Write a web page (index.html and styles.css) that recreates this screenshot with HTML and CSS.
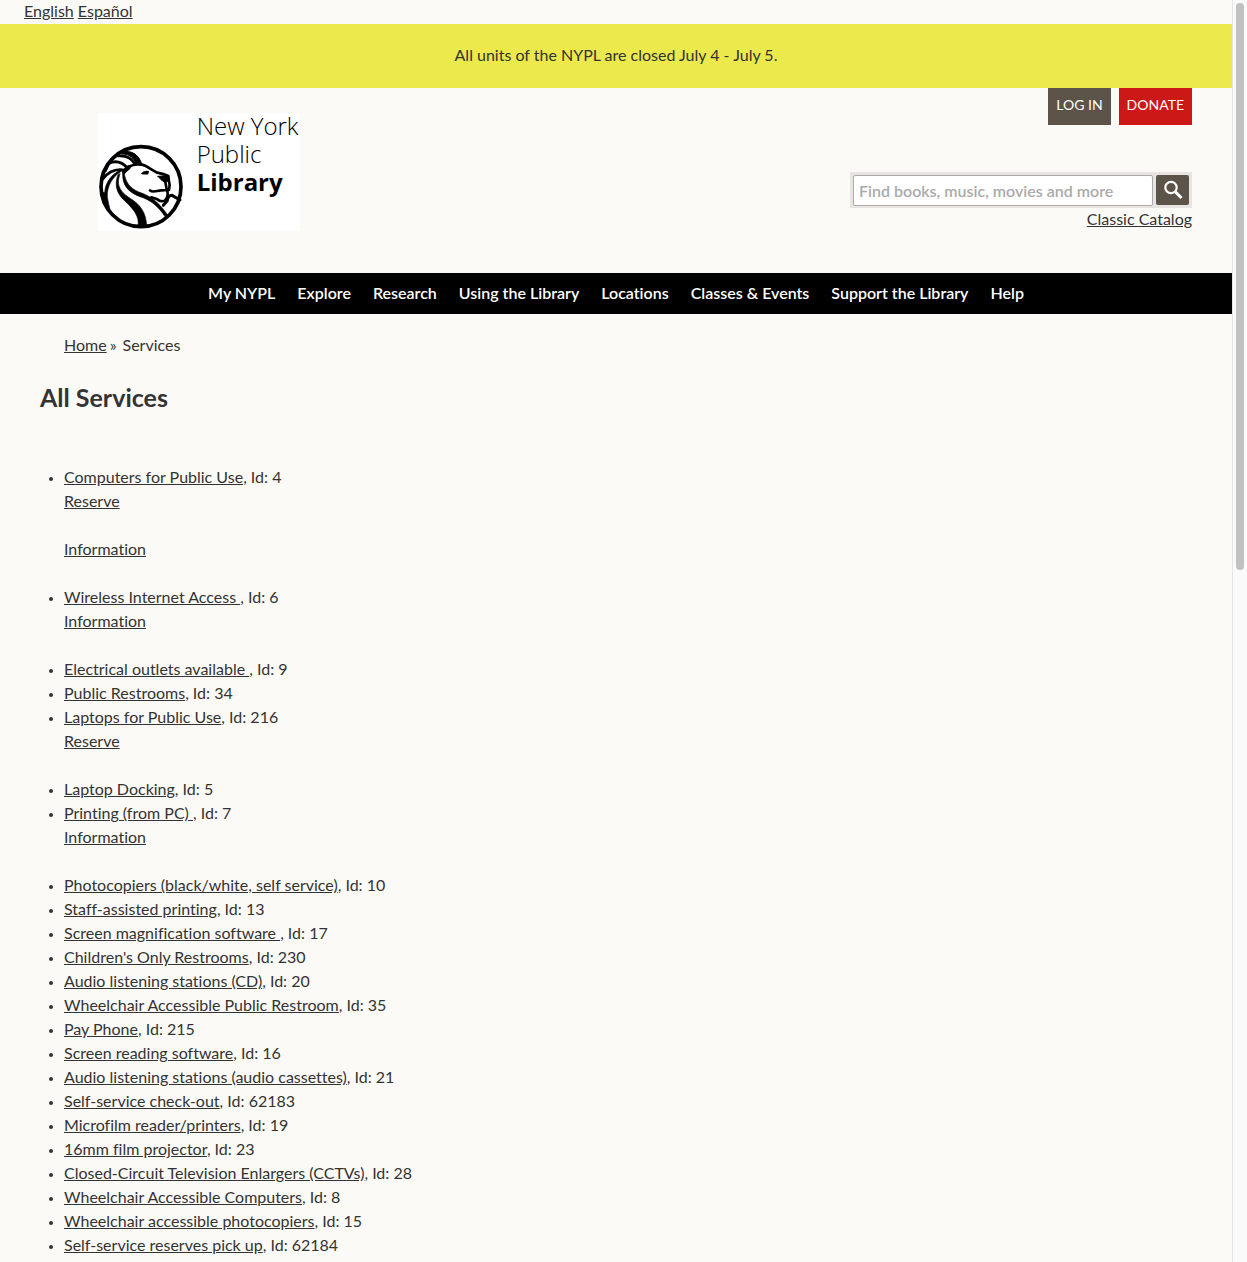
FILE: index.html
```html
<!DOCTYPE html>
<html lang="en">
<head>
<meta charset="utf-8">
<title>All Services | The New York Public Library</title>
<link rel="stylesheet" href="styles.css">
</head>
<body>
<div class="page">
  <div class="languages"><a href="#">English</a> <a href="#">Español</a></div>
  <p class="alert">All units of the NYPL are closed July 4 - July 5.</p>

  <header class="header">
    <a class="logo" href="#" aria-label="New York Public Library">
      <svg viewBox="0 0 606 354" width="202" height="118">
        <g transform="translate(-6 87)" fill="none" stroke="#000" stroke-width="8" stroke-linecap="round" stroke-linejoin="round">
          <circle cx="135" cy="134" r="120" stroke-width="11"/>
          <path d="M84 92C92 74 112 64 138 68C154 72 166 84 184 92C198 95 208 98 217 102"/>
          <path d="M186 103L217 101Q223 106 220 113L215 118L206 121Q194 114 186 103Z" fill="#000" stroke-width="3"/>
          <path d="M218 112Q223 128 219 144L196 145C182 146 170 153 162 145M208 120L212 142" stroke-width="8"/>
          <path d="M214 146Q218 166 206 176Q196 181 184 172L166 166" stroke-width="8"/>
          <path d="M134 95Q144 83 159 87L157 97Q145 99 134 95Z" fill="#000" stroke="none"/>
          <path d="M84 90C88 122 102 138 128 150C158 160 184 174 214 218L206 222C184 190 164 174 132 164C96 150 78 130 80 92Z" fill="#000" stroke-width="2"/>
          <path d="M72 96C58 132 76 152 104 170C132 188 150 210 152 252L126 254C132 222 110 200 90 180C62 156 54 130 66 98Z" fill="#000" stroke-width="2"/>
          <path d="M82 84C56 98 38 122 34 152C32 170 40 188 44 214L24 186L17 150L26 152C28 122 46 94 80 82Z" fill="#000" stroke-width="2"/>
          <path d="M84 84C58 80 36 90 20 112"/>
          <path d="M92 76C76 58 56 56 38 64M38 64L28 86" stroke-width="9"/>
          <path d="M116 65C106 48 88 40 66 42"/>
          <path d="M88 28C116 28 130 44 138 68L120 66C114 48 102 36 78 36Z" fill="#000" stroke-width="3"/>
          <path d="M84 88L98 76" stroke-width="13"/>
          <path d="M214 176Q216 160 228 160L252 174M214 176L202 190" stroke-width="9"/>
        </g>
        <g font-family="Open Sans, sans-serif" font-size="72">
          <text x="296" y="67" font-weight="300">New York</text>
          <text x="296" y="151" font-weight="300">Public</text>
          <text x="296" y="234" font-weight="700">Library</text>
        </g>
      </svg>
    </a>
    <div class="tools">
      <div class="actions">
        <a class="action" href="#">LOG IN</a>
        <a class="action donate" href="#">DONATE</a>
      </div>
      <form class="search">
        <input class="query" type="text" aria-label="Search the catalog" placeholder="Find books, music, movies and more">
        <button class="submit" type="button" aria-label="Search">
          <svg viewBox="0 0 20 20" width="20" height="20" aria-hidden="true"><circle cx="8" cy="7.5" r="5.7" fill="none" stroke="#fff" stroke-width="2.2"/><path d="M12 11.5L18.5 18" stroke="#fff" stroke-width="3"/></svg>
        </button>
      </form>
      <a class="classic" href="#">Classic Catalog</a>
    </div>
  </header>

  <nav class="nav">
    <a href="#">My NYPL</a>
    <a href="#">Explore</a>
    <a href="#">Research</a>
    <a href="#">Using the Library</a>
    <a href="#">Locations</a>
    <a href="#">Classes &amp; Events</a>
    <a href="#">Support the Library</a>
    <a href="#">Help</a>
  </nav>

  <main class="main">
    <div class="crumbs"><a href="#">Home</a><span class="divider">»</span><span>Services</span></div>
    <h1 class="title">All Services</h1>
    <ul class="services">
      <li><a href="#">Computers for Public Use</a>, Id: 4
        <p class="link"><a href="#">Reserve</a></p>
        <p class="link"><a href="#">Information</a></p></li>
      <li><a href="#">Wireless Internet Access </a>, Id: 6
        <p class="link"><a href="#">Information</a></p></li>
      <li><a href="#">Electrical outlets available </a>, Id: 9</li>
      <li><a href="#">Public Restrooms</a>, Id: 34</li>
      <li><a href="#">Laptops for Public Use</a>, Id: 216
        <p class="link"><a href="#">Reserve</a></p></li>
      <li><a href="#">Laptop Docking</a>, Id: 5</li>
      <li><a href="#">Printing (from PC) </a>, Id: 7
        <p class="link"><a href="#">Information</a></p></li>
      <li><a href="#">Photocopiers (black/white, self service)</a>, Id: 10</li>
      <li><a href="#">Staff-assisted printing</a>, Id: 13</li>
      <li><a href="#">Screen magnification software </a>, Id: 17</li>
      <li><a href="#">Children's Only Restrooms</a>, Id: 230</li>
      <li><a href="#">Audio listening stations (CD)</a>, Id: 20</li>
      <li><a href="#">Wheelchair Accessible Public Restroom</a>, Id: 35</li>
      <li><a href="#">Pay Phone</a>, Id: 215</li>
      <li><a href="#">Screen reading software</a>, Id: 16</li>
      <li><a href="#">Audio listening stations (audio cassettes)</a>, Id: 21</li>
      <li><a href="#">Self-service check-out</a>, Id: 62183</li>
      <li><a href="#">Microfilm reader/printers</a>, Id: 19</li>
      <li><a href="#">16mm film projector</a>, Id: 23</li>
      <li><a href="#">Closed-Circuit Television Enlargers (CCTVs)</a>, Id: 28</li>
      <li><a href="#">Wheelchair Accessible Computers</a>, Id: 8</li>
      <li><a href="#">Wheelchair accessible photocopiers</a>, Id: 15</li>
      <li><a href="#">Self-service reserves pick up</a>, Id: 62184</li>
    </ul>
  </main>
</div>
<div class="scrollbar" aria-hidden="true"><div class="thumb"></div></div>
</body>
</html>
```
FILE: styles.css
```css
* { box-sizing: border-box; }
body {
  margin: 0;
  padding-right: 15px;
  background: #fcfaf6;
  color: #333;
  font: 16px/24px Lato, "Liberation Sans", sans-serif;
  font-variant-ligatures: none;
}
a { color: inherit; text-decoration: underline; }
p { margin: 0; }

.languages { padding: 0 24px 2px; line-height: 22px; }
.alert {
  padding: 19px 24px 21px;
  background: #ece94c;
  text-align: center;
}

.header {
  display: flex;
  justify-content: space-between;
  align-items: flex-start;
  padding: 0 40px 42px 98px;
}
.logo {
  display: flex;
  margin-top: 25px;
  background: #fff;
  color: #000;
}
.logo svg { overflow: visible; }
.logo text { fill: #000; }

.tools {
  display: flex;
  flex-direction: column;
  align-items: flex-end;
}
.actions { display: flex; gap: 8px; margin-bottom: 47px; }
.action {
  height: 37px;
  padding: 5px 8px;
  background: #5d5449;
  color: #fff;
  font-size: 14px;
  text-decoration: none;
}
.donate { background: #cc1917; }
.search {
  display: flex;
  gap: 3px;
  padding: 3px 3px 2px;
  background: #e8e4e1;
}
.query {
  width: 300px;
  height: 31px;
  padding: 1px 5px;
  border: 1px solid #aaa;
  border-radius: 2px;
  background: #fff;
  font: 600 16px/24px Lato, sans-serif;
}
.query::placeholder { color: #aaa; opacity: 1; }
.submit {
  display: flex;
  align-items: center;
  justify-content: center;
  width: 33px;
  height: 30px;
  padding: 0;
  border: 0;
  border-radius: 2px;
  background: #5d5449;
}
.classic { line-height: 22px; }

.nav {
  display: flex;
  justify-content: center;
  gap: 22px;
  padding: 8px 0 9px;
  background: #000;
  color: #fff;
  font-weight: 600;
}
.nav a { text-decoration: none; }

.main { padding: 19px 40px 4px; }
.crumbs { padding-left: 24px; }
.divider { margin: 0 6px 0 3px; }
.title {
  margin: 22px 0 50px;
  font-size: 25px;
  line-height: 36px;
}
.services { margin: 0; padding-left: 24px; }
.services li::marker { font-size: 12px; }
.link { padding-bottom: 24px; }

.scrollbar {
  position: fixed;
  top: 0;
  right: 0;
  bottom: 0;
  width: 15px;
  padding: 3px 3px 0;
  border-left: 1px solid #e5e5e5;
  background: #fafafa;
}
.thumb {
  height: 45%;
  border-radius: 4px;
  background: #c1c1c1;
}
```
